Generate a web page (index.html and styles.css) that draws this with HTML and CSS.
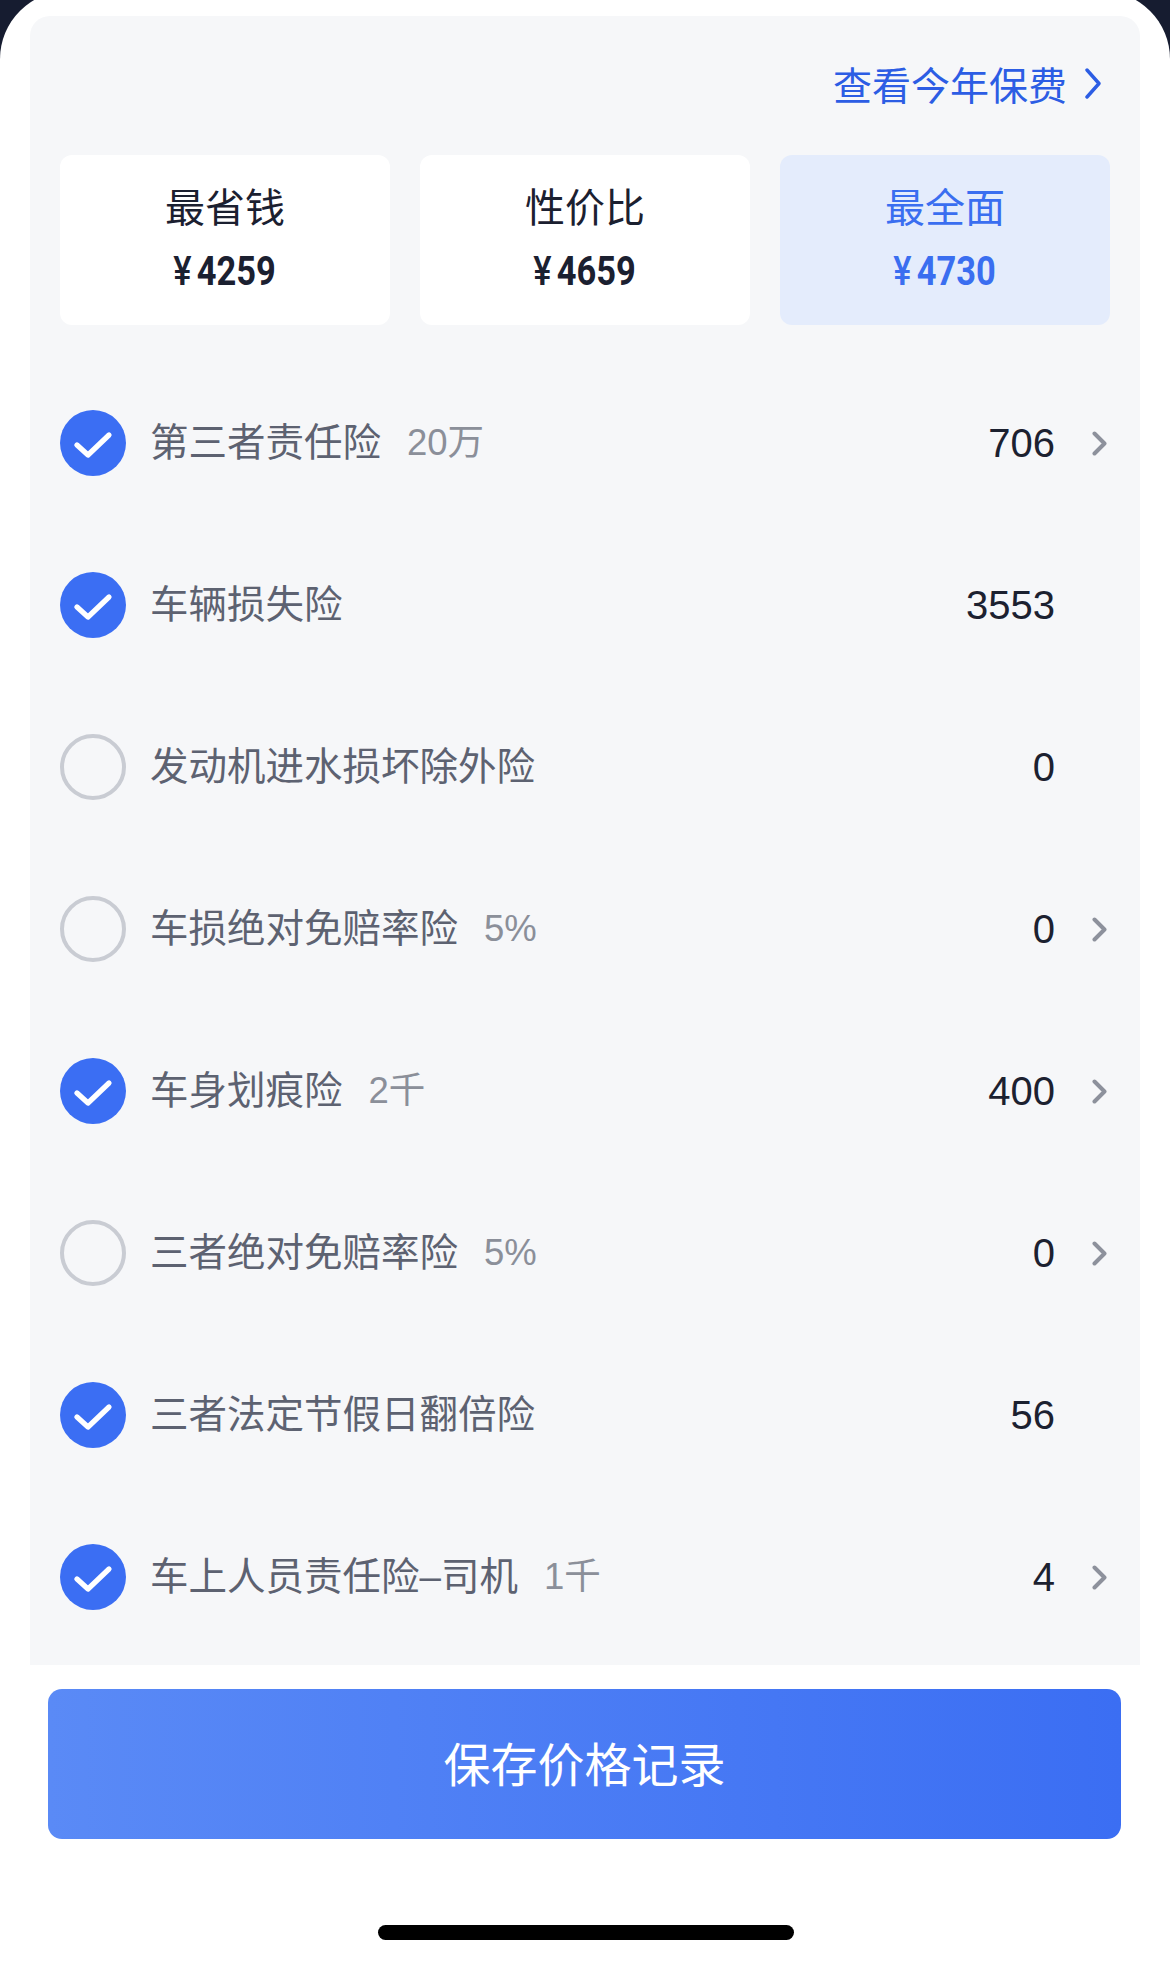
FILE: index.html
```html
<!DOCTYPE html>
<html lang="zh-CN">
<head>
<meta charset="utf-8">
<title>车险方案</title>
<link rel="stylesheet" href="styles.css">
</head>
<body>
<div class="sheet">
  <section class="panel">
    <div class="panel-head">
      <a class="link" href="#">查看今年保费<svg class="link-arrow" viewBox="0 0 16 31" width="16" height="31"><polyline points="2,2 14,15.5 2,29" fill="none" stroke="currentColor" stroke-width="3.4" stroke-linecap="round" stroke-linejoin="round"/></svg></a>
    </div>

    <div class="plans">
      <div class="plan">
        <div class="plan-name">最省钱</div>
        <div class="plan-price"><span class="yen">¥</span><span class="num">4259</span></div>
      </div>
      <div class="plan">
        <div class="plan-name">性价比</div>
        <div class="plan-price"><span class="yen">¥</span><span class="num">4659</span></div>
      </div>
      <div class="plan plan-active">
        <div class="plan-name">最全面</div>
        <div class="plan-price"><span class="yen">¥</span><span class="num">4730</span></div>
      </div>
    </div>

    <ul class="items">
      <li class="item">
        <span class="check on"><svg viewBox="0 0 66 66" width="66" height="66"><polyline points="17,35 28,45 49,25" fill="none" stroke="#fff" stroke-width="5.2" stroke-linecap="round" stroke-linejoin="round"/></svg></span>
        <span class="item-name">第三者责任险</span><span class="item-extra">20万</span>
        <span class="item-value">706</span>
        <svg class="item-arrow" viewBox="0 0 15 25" width="15" height="25"><polyline points="2.5,2.5 12.5,12.5 2.5,22.5" fill="none" stroke="#8d919c" stroke-width="4" stroke-linecap="round" stroke-linejoin="round"/></svg>
      </li>
      <li class="item">
        <span class="check on"><svg viewBox="0 0 66 66" width="66" height="66"><polyline points="17,35 28,45 49,25" fill="none" stroke="#fff" stroke-width="5.2" stroke-linecap="round" stroke-linejoin="round"/></svg></span>
        <span class="item-name">车辆损失险</span>
        <span class="item-value">3553</span>
        <span class="item-arrow blank"></span>
      </li>
      <li class="item">
        <span class="check"></span>
        <span class="item-name">发动机进水损坏除外险</span>
        <span class="item-value">0</span>
        <span class="item-arrow blank"></span>
      </li>
      <li class="item">
        <span class="check"></span>
        <span class="item-name">车损绝对免赔率险</span><span class="item-extra">5%</span>
        <span class="item-value">0</span>
        <svg class="item-arrow" viewBox="0 0 15 25" width="15" height="25"><polyline points="2.5,2.5 12.5,12.5 2.5,22.5" fill="none" stroke="#8d919c" stroke-width="4" stroke-linecap="round" stroke-linejoin="round"/></svg>
      </li>
      <li class="item">
        <span class="check on"><svg viewBox="0 0 66 66" width="66" height="66"><polyline points="17,35 28,45 49,25" fill="none" stroke="#fff" stroke-width="5.2" stroke-linecap="round" stroke-linejoin="round"/></svg></span>
        <span class="item-name">车身划痕险</span><span class="item-extra">2千</span>
        <span class="item-value">400</span>
        <svg class="item-arrow" viewBox="0 0 15 25" width="15" height="25"><polyline points="2.5,2.5 12.5,12.5 2.5,22.5" fill="none" stroke="#8d919c" stroke-width="4" stroke-linecap="round" stroke-linejoin="round"/></svg>
      </li>
      <li class="item">
        <span class="check"></span>
        <span class="item-name">三者绝对免赔率险</span><span class="item-extra">5%</span>
        <span class="item-value">0</span>
        <svg class="item-arrow" viewBox="0 0 15 25" width="15" height="25"><polyline points="2.5,2.5 12.5,12.5 2.5,22.5" fill="none" stroke="#8d919c" stroke-width="4" stroke-linecap="round" stroke-linejoin="round"/></svg>
      </li>
      <li class="item">
        <span class="check on"><svg viewBox="0 0 66 66" width="66" height="66"><polyline points="17,35 28,45 49,25" fill="none" stroke="#fff" stroke-width="5.2" stroke-linecap="round" stroke-linejoin="round"/></svg></span>
        <span class="item-name">三者法定节假日翻倍险</span>
        <span class="item-value">56</span>
        <span class="item-arrow blank"></span>
      </li>
      <li class="item">
        <span class="check on"><svg viewBox="0 0 66 66" width="66" height="66"><polyline points="17,35 28,45 49,25" fill="none" stroke="#fff" stroke-width="5.2" stroke-linecap="round" stroke-linejoin="round"/></svg></span>
        <span class="item-name">车上人员责任险–司机</span><span class="item-extra">1千</span>
        <span class="item-value">4</span>
        <svg class="item-arrow" viewBox="0 0 15 25" width="15" height="25"><polyline points="2.5,2.5 12.5,12.5 2.5,22.5" fill="none" stroke="#8d919c" stroke-width="4" stroke-linecap="round" stroke-linejoin="round"/></svg>
      </li>
    </ul>
  </section>

  <button class="save" type="button">保存价格记录</button>
  <div class="home-bar"></div>
</div>
</body>
</html>
```

FILE: styles.css
```css
html, body {
  margin: 0;
  padding: 0;
}

body {
  width: 1170px;
  height: 1965px;
  overflow: hidden;
  background: #161c30;
  font-family: "Liberation Sans", "Noto Sans CJK SC", sans-serif;
}

/* white bottom sheet */
.sheet {
  margin-top: -9px;
  height: 1974px;
  box-sizing: border-box;
  padding: 25px 30px 0;
  background: #ffffff;
  border-radius: 68px 68px 0 0;
}

/* grey content panel */
.panel {
  height: 1649px;
  box-sizing: border-box;
  padding-top: 42px;
  background: #f6f7f9;
  border-radius: 20px 20px 0 0;
}

.panel-head {
  display: flex;
  justify-content: flex-end;
  padding-right: 39px;
}

.link {
  display: flex;
  align-items: center;
  gap: 18px;
  height: 50px;
  font-family: "Noto Sans CJK SC", sans-serif;
  font-size: 39px;
  line-height: 50px;
  color: #2c5de4;
  text-decoration: none;
}

.link-arrow {
  display: block;
}

/* plan selector */
.plans {
  display: flex;
  gap: 30px;
  padding: 0 30px;
  margin-top: 47px;
}

.plan {
  flex: 1;
  height: 170px;
  box-sizing: border-box;
  padding-top: 26px;
  display: flex;
  flex-direction: column;
  align-items: center;
  background: #ffffff;
  border-radius: 12px;
  color: #1b2030;
}

.plan-active {
  background: #e4ecfc;
  color: #3a6ef0;
}

.plan-name {
  font-family: "Noto Sans CJK SC", sans-serif;
  font-size: 40px;
  line-height: 48px;
}

.plan-price {
  margin-top: 23px;
  height: 40px;
  display: flex;
  align-items: center;
  font-family: Roboto, "Liberation Sans", sans-serif;
  font-weight: 700;
  font-size: 40px;
  line-height: 40px;
  transform: scaleX(0.86);
}

.yen {
  font-weight: 500;
  margin-right: 6px;
}

/* coverage list */
.items {
  list-style: none;
  margin: 37px 0 0;
  padding: 0;
}

.item {
  height: 162px;
  display: flex;
  align-items: center;
  padding: 0 33px 0 30px;
}

.check {
  width: 66px;
  height: 66px;
  box-sizing: border-box;
  border: 4px solid #c9ccd3;
  border-radius: 50%;
  flex: none;
}

.check.on {
  border: none;
  background: #3b6ef3;
}

.check svg {
  display: block;
}

.item-name {
  margin-left: 24px;
  font-size: 38.5px;
  line-height: 48px;
  color: #5d6271;
}

.item-extra {
  margin-left: 26px;
  font-size: 36.5px;
  line-height: 48px;
  color: #8b8f99;
}

.item-value {
  margin-left: auto;
  font-size: 40px;
  line-height: 48px;
  color: #1c2130;
}

.item-arrow {
  display: block;
  width: 15px;
  height: 25px;
  margin-left: 37px;
  flex: none;
}

/* save button */
.save {
  display: block;
  width: 1073px;
  height: 150px;
  margin: 24px 0 0 18px;
  padding: 0 0 6px;
  border: none;
  border-radius: 14px;
  background: linear-gradient(90deg, #5a8af6 0%, #3b6ef3 100%);
  color: #ffffff;
  font-family: "Noto Sans CJK SC", sans-serif;
  font-size: 47px;
}

.home-bar {
  width: 416px;
  height: 15px;
  margin: 86px 0 0 348px;
  background: #000000;
  border-radius: 8px;
}
```
